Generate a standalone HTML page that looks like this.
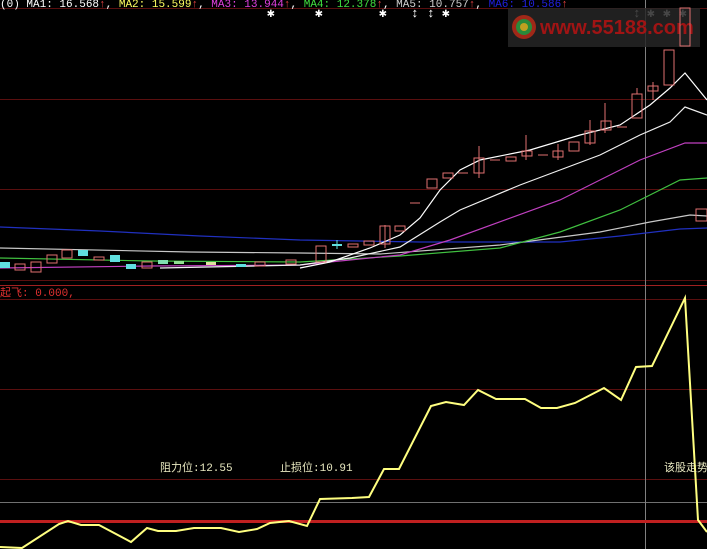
<!DOCTYPE html>
<html><head><meta charset="utf-8"><style>
html,body{margin:0;padding:0;background:#000;width:707px;height:549px;overflow:hidden}
svg{display:block}
text{font-family:"Liberation Mono","Noto Sans CJK SC",monospace;font-size:11px}
</style></head><body>
<svg width="707" height="549" viewBox="0 0 707 549" xmlns="http://www.w3.org/2000/svg">
<rect width="707" height="549" fill="#000"/>
<g stroke="#5a0f0f" stroke-width="1">
<line x1="0" y1="8.5" x2="707" y2="8.5"/>
<line x1="0" y1="99.5" x2="707" y2="99.5"/>
<line x1="0" y1="189.5" x2="707" y2="189.5"/>
<line x1="0" y1="280.5" x2="707" y2="280.5"/>
<line x1="0" y1="299.5" x2="707" y2="299.5"/>
<line x1="0" y1="389.5" x2="707" y2="389.5"/>
<line x1="0" y1="479.5" x2="707" y2="479.5"/>
</g>
<line x1="0" y1="285.5" x2="707" y2="285.5" stroke="#a02020"/>
<line x1="0" y1="502.5" x2="707" y2="502.5" stroke="#707070"/>
<line x1="645.5" y1="0" x2="645.5" y2="549" stroke="#808080"/>
<!-- header -->
<text x="0" y="7" fill="#fff">(0) MA1: 16.568<tspan fill="#e04040">↑</tspan>, <tspan fill="#ffff60">MA2: 15.599</tspan><tspan fill="#e04040">↑</tspan>, <tspan fill="#e040e0">MA3: 13.944</tspan><tspan fill="#e04040">↑</tspan>, <tspan fill="#40e040">MA4: 12.378</tspan><tspan fill="#e04040">↑</tspan>, <tspan fill="#d0d0d0">MA5: 10.757</tspan><tspan fill="#e04040">↑</tspan>, <tspan fill="#2020e0">MA6: 10.586</tspan><tspan fill="#e04040">↑</tspan></text>
<g fill="#fff" font-weight="bold">
<text x="267" y="17" style="font-size:13px">✱</text><text x="315" y="17" style="font-size:13px">✱</text><text x="379" y="17" style="font-size:13px">✱</text><text x="411" y="17" style="font-size:13px">↕</text><text x="427" y="17" style="font-size:13px">↕</text><text x="442" y="17" style="font-size:13px">✱</text>
<text x="633" y="17" style="font-size:13px">↕</text><text x="647" y="17" style="font-size:13px">✱</text><text x="663" y="17" style="font-size:13px">✱</text><text x="679" y="17" style="font-size:13px">✱</text>
</g>
<!-- logo -->
<rect x="508" y="8" width="192" height="39" fill="#262626" opacity="0.85"/>
<circle cx="524" cy="27" r="12" fill="#a02818"/>
<circle cx="524" cy="27" r="8" fill="#2a8a3a"/>
<circle cx="524" cy="27" r="4" fill="#c0a020"/>
<text x="540" y="34" fill="#a01414" style="font-family:'Liberation Sans',sans-serif;font-size:20px;font-weight:bold">www.55188.com</text>
<!-- moving averages -->
<g fill="none" stroke-width="1.2">
<polyline stroke="#2030c0" points="0,227 100,231 200,236 300,240 420,242 560,242 620,236 680,229 707,228"/>
<polyline stroke="#c8c8c8" points="0,248 190,252 300,253 380,254 500,245 600,232 650,222 690,215 707,216"/>
<polyline stroke="#40c040" points="0,258 150,261 300,262 400,256 500,248 560,232 620,210 680,180 707,178"/>
<polyline stroke="#c040c0" points="0,268 150,266 300,265 400,255 450,240 560,200 640,160 685,143 707,143"/>
<polyline stroke="#f0f0f0" points="160,268 300,265 350,258 400,247 440,222 460,210 520,185 600,155 640,135 670,122 685,107 707,115"/>
<polyline stroke="#ffffff" points="300,268 330,262 370,248 400,235 420,218 440,190 460,170 480,160 530,150 580,135 620,125 650,105 670,88 685,73 707,100"/>
</g>
<!-- candles -->
<g stroke="#e07070" fill="none" stroke-width="1">
<rect x="15" y="264" width="10" height="6"/><rect x="31" y="262" width="10" height="10"/>
<rect x="47" y="255" width="10" height="8"/><rect x="62" y="250" width="10" height="8"/>
<rect x="94" y="257" width="10" height="3"/><rect x="142" y="262" width="10" height="6"/>
<rect x="255" y="262" width="10" height="4"/><rect x="286" y="260" width="10" height="4"/>
<rect x="316" y="246" width="10" height="16"/><rect x="348" y="244" width="10" height="3"/>
<rect x="364" y="241" width="10" height="4"/><rect x="380" y="226" width="10" height="18"/>
<rect x="395" y="226" width="10" height="5"/><line x1="410" y1="203" x2="420" y2="203"/>
<rect x="427" y="179" width="10" height="9"/><rect x="443" y="173" width="10" height="5"/>
<line x1="458" y1="173" x2="468" y2="173"/><rect x="474" y="158" width="10" height="15"/>
<line x1="490" y1="160" x2="500" y2="160"/><rect x="506" y="157" width="10" height="4"/>
<rect x="522" y="151" width="10" height="5"/><line x1="538" y1="155" x2="548" y2="155"/>
<rect x="553" y="151" width="10" height="6"/><rect x="569" y="142" width="10" height="9"/>
<rect x="585" y="131" width="10" height="12"/><rect x="601" y="121" width="10" height="9"/>
<line x1="617" y1="127" x2="627" y2="127"/><rect x="632" y="94" width="10" height="24"/>
<rect x="648" y="86" width="10" height="5"/><rect x="664" y="50" width="10" height="35"/>
<rect x="680" y="8" width="10" height="38"/><rect x="696" y="209" width="11" height="12"/>
<line x1="605" y1="103" x2="605" y2="133"/><line x1="637" y1="88" x2="637" y2="94"/>
<line x1="653" y1="82" x2="653" y2="100"/><line x1="479" y1="146" x2="479" y2="178"/>
<line x1="526" y1="135" x2="526" y2="160"/><line x1="558" y1="144" x2="558" y2="160"/>
<line x1="590" y1="120" x2="590" y2="145"/><line x1="385" y1="225" x2="385" y2="248"/>
</g>
<g fill="#60e0e0">
<rect x="0" y="262" width="10" height="6"/><rect x="78" y="250" width="10" height="6"/>
<rect x="110" y="255" width="10" height="7"/><rect x="126" y="264" width="10" height="5"/>
<rect x="158" y="260" width="10" height="4" fill="#80e0b0"/><rect x="236" y="264" width="10" height="3"/>
<rect x="174" y="261" width="10" height="3" fill="#90e090"/><rect x="206" y="262" width="10" height="3" fill="#e0e0a0"/>
<rect x="332" y="244" width="10" height="2"/><line x1="337" y1="240" x2="337" y2="249" stroke="#60e0e0"/>
</g>
<!-- lower panel -->
<text x="0" y="296" fill="#e03030">起飞: 0.000,</text>
<line x1="0" y1="521.5" x2="707" y2="521.5" stroke="#c02020" stroke-width="3"/>
<polyline fill="none" stroke="#ffff80" stroke-width="2" points="0,547 22,548 59,524 68,521 81,525 99,525 131,542 147,528 158,531 176,531 194,528 221,528 239,532 257,529 270,523 289,521 307,526 320,499 352,498 369,497 384,469 399,469 431,406 446,402 464,405 478,390 496,399 525,399 541,408 557,408 575,403 604,388 621,400 636,367 652,366 685,298 698,520 707,532"/>
<text x="160" y="471" fill="#e8e8c0">阻力位:12.55</text>
<text x="280" y="471" fill="#e8e8c0">止损位:10.91</text>
<text x="664" y="471" fill="#e8e8c0">该股走势</text>
</svg>
</body></html>
